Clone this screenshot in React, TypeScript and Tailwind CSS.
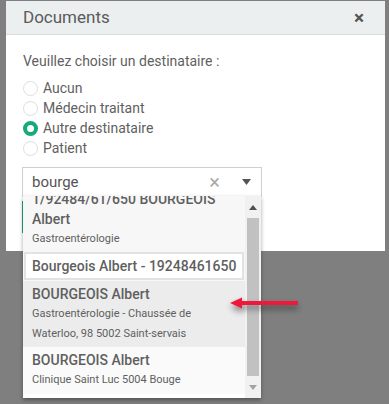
import React from 'react';

const options = [
  { label: 'Aucun', checked: false },
  { label: 'Médecin traitant', checked: false },
  { label: 'Autre destinataire', checked: true },
  { label: 'Patient', checked: false },
];

const Radio = ({ checked }: { checked: boolean }) =>
  checked ? (
    <span className="w-[15px] h-[15px] rounded-full border-[4px] border-[#16a97b] bg-white shrink-0" />
  ) : (
    <span className="w-[15px] h-[15px] rounded-full border border-[#dedede] bg-white shrink-0" />
  );

export default function App() {
  return (
    <div className="relative w-[389px] h-[404px] overflow-hidden bg-[#7f7f7f] font-['Roboto',sans-serif] text-[#5f5f5f]">
      <div className="ml-[6px] mt-[1px] w-[379px] h-[250px] bg-white">
        <div className="h-[34px] bg-[#eceff0] border-b border-[#dadddd] flex items-center justify-between pl-[17px] pr-[21px]">
          <span className="text-[17px] text-[#5a5a5a]">Documents</span>
          <span className="text-[19px] leading-none font-bold text-[#555]">×</span>
        </div>
        <div className="pl-[17px] pr-[20px] pt-[16px]">
          <p className="text-[14px] leading-[20px]">Veuillez choisir un destinataire :</p>
          <div className="mt-[7px] flex flex-col">
            {options.map((o) => (
              <label key={o.label} className="flex items-center gap-[5px] h-[20px] text-[14px]">
                <Radio checked={o.checked} />
                <span>{o.label}</span>
              </label>
            ))}
          </div>
          <div className="mt-[9px] ml-[-1px] w-[240px] h-[30px] border border-[#cfcfcf] flex items-center pl-[9px] pr-[10px]">
            <span className="flex-1 text-[15px] text-[#555]">bourge</span>
            <span className="text-[20px] leading-[20px] text-[#aaa] mr-[22px]">×</span>
            <svg width="9" height="6" viewBox="0 0 9 6"><path d="M0 0h9L4.5 6z" fill="#555" /></svg>
          </div>
          <div className="mt-[4px] ml-[-1px] w-[120px] h-[32px] bg-[#16a97b]" />
        </div>
      </div>

      {/* open dropdown */}
      <div className="absolute left-[23px] top-[196px] w-[238px] h-[202px] bg-white shadow-[0_2px_4px_rgba(0,0,0,0.35)] flex overflow-hidden">
        <div className="flex-1 overflow-hidden">
          <div className="mt-[-10px]">
            <div className="bg-[#f7f7f7] pl-[9px] pt-[3px] pb-[3px]">
              <div className="text-[14px] leading-[20px] font-medium">1/92484/61/650 BOURGEOIS<br />Albert</div>
              <div className="text-[11px] leading-[20px]">Gastroentérologie</div>
            </div>
            <div className="bg-[#f7f7f7] px-[1px] pb-[1px]">
              <div className="border-2 border-[#e2e2e2] bg-white h-[28px] flex items-center pl-[6px] text-[14px] font-medium whitespace-nowrap">
                Bourgeois Albert - 19248461650
              </div>
            </div>
            <div className="bg-[#ececec] pl-[9px] pt-[3px] pb-[3px]">
              <div className="text-[14px] leading-[20px] font-medium">BOURGEOIS Albert</div>
              <div className="text-[11px] leading-[20px]">Gastroentérologie - Chaussée de<br />Waterloo, 98 5002 Saint-servais</div>
            </div>
            <div className="bg-[#fafafa] pl-[9px] pt-[3px] pb-[4px]">
              <div className="text-[14px] leading-[20px] font-medium">BOURGEOIS Albert</div>
              <div className="text-[11px] leading-[20px]">Clinique Saint Luc 5004 Bouge</div>
            </div>
          </div>
        </div>
        <div className="w-[16px] bg-[#f1f1f1] flex flex-col items-center">
          <div className="h-[22px] flex items-center justify-center">
            <svg width="8" height="5" viewBox="0 0 8 5"><path d="M4 0L8 5H0z" fill="#505050" /></svg>
          </div>
          <div className="w-[12px] h-[158px] bg-[#c1c1c1]" />
          <div className="flex-1 flex items-center justify-center">
            <svg width="8" height="5" viewBox="0 0 8 5"><path d="M0 0h8L4 5z" fill="#a3a3a3" /></svg>
          </div>
        </div>
      </div>

      {/* red annotation arrow */}
      <svg className="absolute left-[226px] top-[294px] drop-shadow-[0_4px_3px_rgba(0,0,0,0.45)]" width="76" height="20" viewBox="0 0 76 20">
        <path d="M15 7h57v4H15z" fill="#f0173c" />
        <path d="M4 9L16 3.5v11z" fill="#f0173c" />
      </svg>
    </div>
  );
}
